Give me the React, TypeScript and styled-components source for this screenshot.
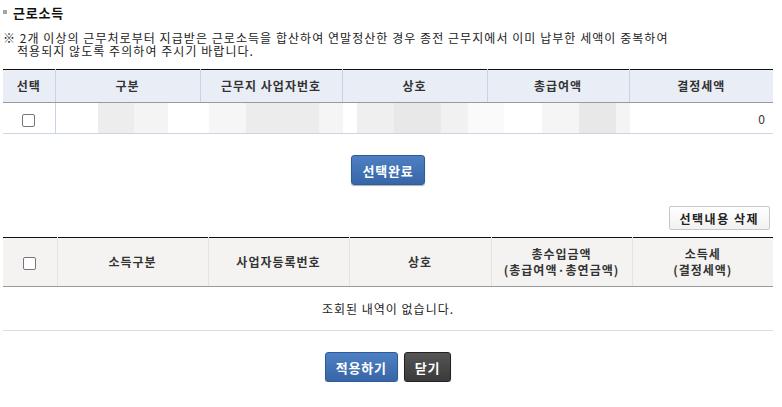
import React from 'react';
import styled, {createGlobalStyle} from 'styled-components';

const GlobalStyle = createGlobalStyle`
  html, body {
    margin: 0;
    padding: 0;
    background: #fff;
  }
  body {
    font-family: 'Noto Sans CJK KR', 'Noto Sans', sans-serif;
    font-size: 12px;
    color: #222;
  }
`;

const Page = styled.div`
  width: 770px;
  padding: 4px 0 0 3px;
`;

const Title = styled.h3`
  display: flex;
  align-items: center;
  gap: 6px;
  margin: 0;
  height: 16px;
  font-size: 13px;
  font-weight: 700;
  color: #111;
  letter-spacing: 0.8px;
  &::before {
    content: '';
    width: 4px;
    height: 4px;
    background: #a5a5a5;
  }
`;

const Note = styled.div`
  margin-top: 11px;
  font-size: 12px;
  color: #222;
  letter-spacing: 1.05px;
`;

const NoteLine = styled.div<{$indent?: boolean}>`
  height: 13px;
  line-height: 13px;
  padding-left: ${(p) => (p.$indent ? 14 : 0)}px;
`;

const Table = styled.table<{$head: string; $line: string; $rowLine: string}>`
  width: 770px;
  border-collapse: collapse;
  table-layout: fixed;
  border-top: 1px solid #111;
  th {
    background: ${(p) => p.$head};
    font-weight: 700;
    font-size: 12px;
    color: #333;
    text-align: center;
    line-height: 16px;
    letter-spacing: 1px;
    border-bottom: 1px solid #9a9a9a;
    border-left: 1px solid ${(p) => p.$line};
    padding: 0;
  }
  th:first-child {
    border-left: none;
  }
  td {
    border-bottom: 1px solid ${(p) => p.$rowLine};
    padding: 0;
    font-size: 12px;
  }
`;

const Col = styled.col<{$w: number}>`
  width: ${(p) => p.$w}px;
`;

const FirstTable = styled(Table)`
  margin-top: 12px;
  th {
    height: 32px;
  }
  td {
    height: 30px;
  }
`;

const SecondTable = styled(Table)`
  th {
    height: 48px;
  }
  td {
    height: 43px;
  }
`;

const CheckCell = styled.td`
  text-align: center;
  border-right: 1px solid #c9d3e1;
`;

const AmountCell = styled.td`
  text-align: right;
  padding-right: 8px !important;
  border-left: 1px solid #c9d3e1;
  color: #333;
`;

const EmptyCell = styled.td`
  text-align: center;
  color: #222;
  letter-spacing: 1px;
`;

const Check = styled.span`
  display: inline-block;
  width: 11px;
  height: 11px;
  border: 1px solid #767676;
  border-radius: 2px;
  background: #fff;
  vertical-align: middle;
`;

const Redacted = styled.div`
  display: flex;
  height: 30px;
`;

const Blob = styled.div<{$w: number; $c: string}>`
  width: ${(p) => p.$w}px;
  flex: none;
  background: ${(p) => p.$c};
`;

const Center = styled.div<{$top: number; $gap?: number}>`
  display: flex;
  justify-content: center;
  gap: ${(p) => p.$gap || 0}px;
  margin-top: ${(p) => p.$top}px;
`;

const Right = styled.div`
  display: flex;
  justify-content: flex-end;
  margin: 21px 0 7px;
  padding-right: 3px;
`;

const Button = styled.button<{$tone: 'blue' | 'dark'}>`
  height: 30px;
  padding: 0 10px;
  border-radius: 3px;
  font-family: inherit;
  font-size: 13px;
  font-weight: 700;
  letter-spacing: 0.8px;
  color: #fff;
  cursor: pointer;
  border: 1px solid ${(p) => (p.$tone === 'blue' ? '#2e5c99' : '#222')};
  background: ${(p) =>
    p.$tone === 'blue'
      ? 'linear-gradient(#4d80c2, #3766a8)'
      : 'linear-gradient(#555, #3a3a3a)'};
  box-shadow: 0 1px 1px rgba(0, 0, 0, 0.3);
`;

const GhostButton = styled.button`
  height: 24px;
  padding: 0 10px;
  border: 1px solid #c8c8c8;
  border-radius: 2px;
  background: linear-gradient(#fff, #f1f1f1);
  font-family: inherit;
  font-size: 12px;
  font-weight: 700;
  letter-spacing: 1.5px;
  color: #222;
  cursor: pointer;
`;

const firstCols = [52, 145, 142, 145, 142, 144];
const secondCols = [54, 151, 141, 142, 141, 141];

const blobs: [number, string][] = [
  [42, '#fff'],
  [36, '#ededed'],
  [34, '#f4f4f4'],
  [41, '#fff'],
  [37, '#f6f6f6'],
  [73, '#ececec'],
  [24, '#f5f5f5'],
  [14, '#fff'],
  [37, '#efefef'],
  [47, '#e8e8e8'],
  [27, '#f1f1f1'],
  [36, '#fafafa'],
  [38, '#fff'],
  [37, '#f5f5f5'],
  [37, '#e8e8e8'],
  [14, '#f4f4f4']
];

const App = () => {
  return (
    <Page>
      <GlobalStyle />
      <Title>근로소득</Title>
      <Note>
        <NoteLine>
          ※ 2개 이상의 근무처로부터 지급받은 근로소득을 합산하여 연말정산한 경우 종전 근무지에서 이미 납부한 세액이 중복하여
        </NoteLine>
        <NoteLine $indent>적용되지 않도록 주의하여 주시기 바랍니다.</NoteLine>
      </Note>

      <FirstTable $head="#e9edf5" $line="#c8d2e0" $rowLine="#c9d5e3">
        <colgroup>
          {firstCols.map((w, i) => (
            <Col key={i} $w={w} />
          ))}
        </colgroup>
        <thead>
          <tr>
            <th>선택</th>
            <th>구분</th>
            <th>근무지 사업자번호</th>
            <th>상호</th>
            <th>총급여액</th>
            <th>결정세액</th>
          </tr>
        </thead>
        <tbody>
          <tr>
            <CheckCell>
              <Check />
            </CheckCell>
            <td colSpan={4}>
              <Redacted>
                {blobs.map(([w, c], i) => (
                  <Blob key={i} $w={w} $c={c} />
                ))}
              </Redacted>
            </td>
            <AmountCell>0</AmountCell>
          </tr>
        </tbody>
      </FirstTable>

      <Center $top={21}>
        <Button $tone="blue">선택완료</Button>
      </Center>

      <Right>
        <GhostButton>선택내용 삭제</GhostButton>
      </Right>

      <SecondTable $head="#f4f3f1" $line="#e3e3e3" $rowLine="#dcdcdc">
        <colgroup>
          {secondCols.map((w, i) => (
            <Col key={i} $w={w} />
          ))}
        </colgroup>
        <thead>
          <tr>
            <th>
              <Check />
            </th>
            <th>소득구분</th>
            <th>사업자등록번호</th>
            <th>상호</th>
            <th>
              총수입금액
              <br />
              (총급여액·총연금액)
            </th>
            <th>
              소득세
              <br />
              (결정세액)
            </th>
          </tr>
        </thead>
        <tbody>
          <tr>
            <EmptyCell colSpan={6}>조회된 내역이 없습니다.</EmptyCell>
          </tr>
        </tbody>
      </SecondTable>

      <Center $top={21} $gap={6}>
        <Button $tone="blue">적용하기</Button>
        <Button $tone="dark">닫기</Button>
      </Center>
    </Page>
  );
};

export default App;
